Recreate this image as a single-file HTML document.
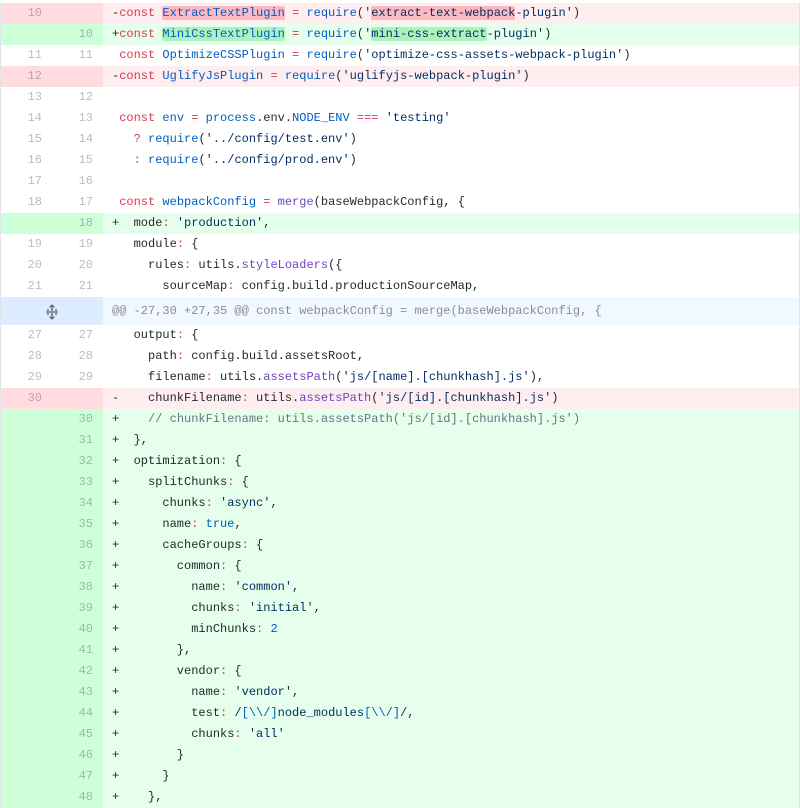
<!DOCTYPE html>
<html><head><meta charset="utf-8"><style>
body{margin:0;background:#fff;width:800px;height:808px;overflow:hidden;font-family:"Liberation Mono",monospace;font-size:12px;}
.wrap{position:absolute;left:0;top:3px;width:798px;border-left:1px solid #e1e4e8;border-right:1px solid #e1e4e8;}
.r{display:flex;height:21px;line-height:21px;}
.n{width:51px;box-sizing:border-box;padding-right:10px;text-align:right;color:rgba(27,31,35,.3);flex:none}
.c{flex:1;padding-left:9px;white-space:pre;color:#24292e}
.d .n{background:#ffdce0}.d .c{background:#ffeef0}
.a .n{background:#cdffd8}.a .c{background:#e6ffed}
.h{height:28px;line-height:28px}
.h .g{width:102px;background:#dbedff;flex:none;position:relative}
.h .c{background:#f1f8ff;color:rgba(27,31,35,.5)}
.k{color:#d73a49}.e{color:#005cc5}.s{color:#032f62}.f{color:#6f42c1}.m{color:#6a737d}
.xd{background:#fdb8c0;border-radius:2px}.xa{background:#acf2bd;border-radius:2px}
</style></head><body><div class="wrap">
<div class="r d"><div class="n">10</div><div class="n"></div><div class="c">-<span class="k">const</span> <span class="e xd">ExtractTextPlugin</span> <span class="k">=</span> <span class="e">require</span>(<span class="s">'<span class="xd">extract-text-webpack</span>-plugin'</span>)</div></div>
<div class="r a"><div class="n"></div><div class="n">10</div><div class="c">+<span class="k">const</span> <span class="e xa">MiniCssTextPlugin</span> <span class="k">=</span> <span class="e">require</span>(<span class="s">'<span class="xa">mini-css-extract</span>-plugin'</span>)</div></div>
<div class="r"><div class="n">11</div><div class="n">11</div><div class="c"> <span class="k">const</span> <span class="e">OptimizeCSSPlugin</span> <span class="k">=</span> <span class="e">require</span>(<span class="s">'optimize-css-assets-webpack-plugin'</span>)</div></div>
<div class="r d"><div class="n">12</div><div class="n"></div><div class="c">-<span class="k">const</span> <span class="e">UglifyJsPlugin</span> <span class="k">=</span> <span class="e">require</span>(<span class="s">'uglifyjs-webpack-plugin'</span>)</div></div>
<div class="r"><div class="n">13</div><div class="n">12</div><div class="c"> </div></div>
<div class="r"><div class="n">14</div><div class="n">13</div><div class="c"> <span class="k">const</span> <span class="e">env</span> <span class="k">=</span> <span class="e">process</span>.env.<span class="e">NODE_ENV</span> <span class="k">===</span> <span class="s">'testing'</span></div></div>
<div class="r"><div class="n">15</div><div class="n">14</div><div class="c">   <span class="k">?</span> <span class="e">require</span>(<span class="s">'../config/test.env'</span>)</div></div>
<div class="r"><div class="n">16</div><div class="n">15</div><div class="c">   <span class="k">:</span> <span class="e">require</span>(<span class="s">'../config/prod.env'</span>)</div></div>
<div class="r"><div class="n">17</div><div class="n">16</div><div class="c"> </div></div>
<div class="r"><div class="n">18</div><div class="n">17</div><div class="c"> <span class="k">const</span> <span class="e">webpackConfig</span> <span class="k">=</span> <span class="f">merge</span>(baseWebpackConfig, {</div></div>
<div class="r a"><div class="n"></div><div class="n">18</div><div class="c">+  mode<span class="k">:</span> <span class="s">'production'</span>,</div></div>
<div class="r"><div class="n">19</div><div class="n">19</div><div class="c">   module<span class="k">:</span> {</div></div>
<div class="r"><div class="n">20</div><div class="n">20</div><div class="c">     rules<span class="k">:</span> utils.<span class="f">styleLoaders</span>({</div></div>
<div class="r"><div class="n">21</div><div class="n">21</div><div class="c">       sourceMap<span class="k">:</span> config.build.productionSourceMap,</div></div>
<div class="r h"><div class="g"><svg style="position:absolute;left:44px;top:7px" width="14" height="16" viewBox="0 0 14 16"><path d="M7 1v5M4.5 3.5L7 1l2.5 2.5M7 15v-5M4.5 12.5L7 15l2.5-2.5M1 8h12M2 6h2M6 6h2M10 6h2M2 10h2M6 10h2M10 10h2" stroke="#586069" stroke-width="1.2" fill="none"/></svg></div><div class="c">@@ -27,30 +27,35 @@ const webpackConfig = merge(baseWebpackConfig, {</div></div>
<div class="r"><div class="n">27</div><div class="n">27</div><div class="c">   output<span class="k">:</span> {</div></div>
<div class="r"><div class="n">28</div><div class="n">28</div><div class="c">     path<span class="k">:</span> config.build.assetsRoot,</div></div>
<div class="r"><div class="n">29</div><div class="n">29</div><div class="c">     filename<span class="k">:</span> utils.<span class="f">assetsPath</span>(<span class="s">'js/[name].[chunkhash].js'</span>),</div></div>
<div class="r d"><div class="n">30</div><div class="n"></div><div class="c">-    chunkFilename<span class="k">:</span> utils.<span class="f">assetsPath</span>(<span class="s">'js/[id].[chunkhash].js'</span>)</div></div>
<div class="r a"><div class="n"></div><div class="n">30</div><div class="c">+    <span class="m">// chunkFilename: utils.assetsPath('js/[id].[chunkhash].js')</span></div></div>
<div class="r a"><div class="n"></div><div class="n">31</div><div class="c">+  },</div></div>
<div class="r a"><div class="n"></div><div class="n">32</div><div class="c">+  optimization<span class="k">:</span> {</div></div>
<div class="r a"><div class="n"></div><div class="n">33</div><div class="c">+    splitChunks<span class="k">:</span> {</div></div>
<div class="r a"><div class="n"></div><div class="n">34</div><div class="c">+      chunks<span class="k">:</span> <span class="s">'async'</span>,</div></div>
<div class="r a"><div class="n"></div><div class="n">35</div><div class="c">+      name<span class="k">:</span> <span class="e">true</span>,</div></div>
<div class="r a"><div class="n"></div><div class="n">36</div><div class="c">+      cacheGroups<span class="k">:</span> {</div></div>
<div class="r a"><div class="n"></div><div class="n">37</div><div class="c">+        common<span class="k">:</span> {</div></div>
<div class="r a"><div class="n"></div><div class="n">38</div><div class="c">+          name<span class="k">:</span> <span class="s">'common'</span>,</div></div>
<div class="r a"><div class="n"></div><div class="n">39</div><div class="c">+          chunks<span class="k">:</span> <span class="s">'initial'</span>,</div></div>
<div class="r a"><div class="n"></div><div class="n">40</div><div class="c">+          minChunks<span class="k">:</span> <span class="e">2</span></div></div>
<div class="r a"><div class="n"></div><div class="n">41</div><div class="c">+        },</div></div>
<div class="r a"><div class="n"></div><div class="n">42</div><div class="c">+        vendor<span class="k">:</span> {</div></div>
<div class="r a"><div class="n"></div><div class="n">43</div><div class="c">+          name<span class="k">:</span> <span class="s">'vendor'</span>,</div></div>
<div class="r a"><div class="n"></div><div class="n">44</div><div class="c">+          test<span class="k">:</span> <span class="s">/</span><span class="e">[\\/]</span><span class="s">node_modules</span><span class="e">[\\/]</span><span class="s">/</span>,</div></div>
<div class="r a"><div class="n"></div><div class="n">45</div><div class="c">+          chunks<span class="k">:</span> <span class="s">'all'</span></div></div>
<div class="r a"><div class="n"></div><div class="n">46</div><div class="c">+        }</div></div>
<div class="r a"><div class="n"></div><div class="n">47</div><div class="c">+      }</div></div>
<div class="r a"><div class="n"></div><div class="n">48</div><div class="c">+    },</div></div>
</div></body></html>
